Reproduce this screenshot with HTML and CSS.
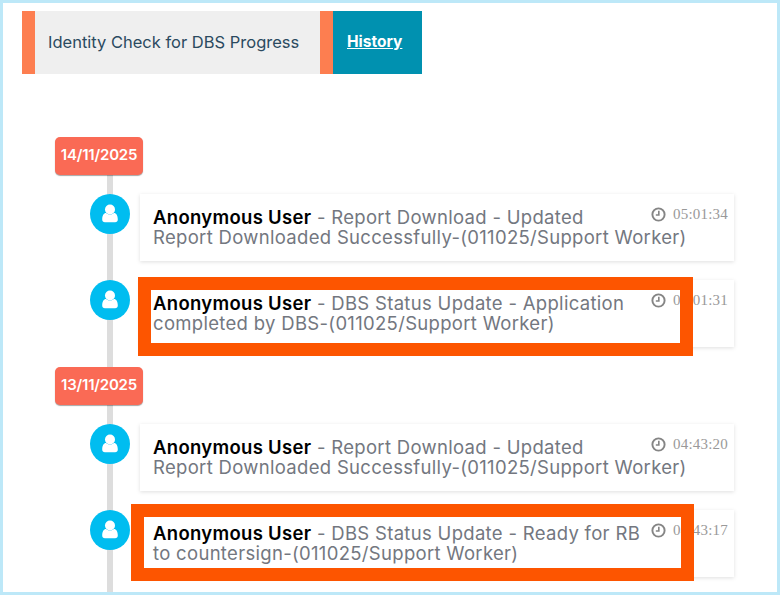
FILE: index.html
```html
<!DOCTYPE html>
<html lang="en">
<head>
<meta charset="utf-8">
<title>DBS History</title>
<link rel="stylesheet" href="styles.css">
</head>
<body>
<svg class="defs" width="0" height="0" aria-hidden="true">
  <symbol id="user" viewBox="0 0 40 40">
    <circle cx="20" cy="15.5" r="5" fill="#fff"/>
    <path d="M12.2 25.5c0-4.2 1.6-6.6 3.8-6.6 1 .9 2.5 1.5 4 1.5s3-.6 4-1.5c2.2 0 3.8 2.4 3.8 6.6 0 1.7-1.1 2.7-2.7 2.7H14.900c-1.600 0-2.700-1-2.700-2.700z" fill="#fff"/>
  </symbol>
  <symbol id="clock" viewBox="0 0 14 14">
    <circle cx="7" cy="7" r="5.700" fill="none" stroke="#858585" stroke-width="1.800"/>
    <path d="M7.300 3.600v3.900H4.500" fill="none" stroke="#858585" stroke-width="1.500"/>
  </symbol>
</svg>
<div class="frame">
  <nav class="tabs">
    <div class="tab tab-plain">Identity Check for DBS Progress</div>
    <div class="tab tab-active"><a href="#">History</a></div>
  </nav>
  <div class="timeline">
    <section class="group">
      <div class="date">14/11/2025</div>
      <article class="item">
        <svg class="avatar"><use href="#user"/></svg>
        <div class="card">
          <span class="time"><svg class="clock"><use href="#clock"/></svg>05:01:34</span>
          <p><b>Anonymous User</b> - Report Download - Updated<br>Report Downloaded Successfully-(011025/Support Worker)</p>
        </div>
      </article>
      <article class="item">
        <svg class="avatar"><use href="#user"/></svg>
        <div class="card">
          <span class="time"><svg class="clock"><use href="#clock"/></svg>05:01:31</span>
          <p><b>Anonymous User</b> - DBS Status Update - Application<br>completed by DBS-(011025/Support Worker)</p>
          <div class="mark mark-one"></div>
        </div>
      </article>
    </section>
    <section class="group">
      <div class="date">13/11/2025</div>
      <article class="item">
        <svg class="avatar"><use href="#user"/></svg>
        <div class="card">
          <span class="time"><svg class="clock"><use href="#clock"/></svg>04:43:20</span>
          <p><b>Anonymous User</b> - Report Download - Updated<br>Report Downloaded Successfully-(011025/Support Worker)</p>
        </div>
      </article>
      <article class="item">
        <svg class="avatar"><use href="#user"/></svg>
        <div class="card">
          <span class="time"><svg class="clock"><use href="#clock"/></svg>04:43:17</span>
          <p><b>Anonymous User</b> - DBS Status Update - Ready for RB<br>to countersign-(011025/Support Worker)</p>
          <div class="mark mark-two"></div>
        </div>
      </article>
    </section>
  </div>
</div>
</body>
</html>
```
FILE: styles.css
```css
* { box-sizing: border-box; }
html, body { margin: 0; padding: 0; }
body {
  width: 780px;
  height: 595px;
  overflow: hidden;
  background: #fff;
  font-family: Inter, "Open Sans", sans-serif;
}
.defs { position: absolute; }
.frame {
  width: 780px;
  height: 595px;
  border: 3px solid #bde8f8;
  padding: 8px 0 0 19px;
  overflow: hidden;
}
.tabs {
  display: flex;
  width: 400px;
  height: 63px;
}
.tab {
  display: flex;
  align-items: center;
  border-left: 13px solid #fd7e50;
}
.tab-plain {
  width: 298px;
  padding: 0 0 2px 13px;
  background: #efefef;
  color: #2b4a60;
  font-size: 16.500px;
}
.tab-active {
  width: 102px;
  padding: 0 0 2px 14px;
  background: #0091b0;
  font-size: 15.500px;
}
.tab-active a {
  color: #fff;
  font-weight: 700;
}
.timeline {
  position: relative;
  display: flex;
  flex-direction: column;
  gap: 20px;
  margin: 63px 0 0 33px;
}
.timeline::before {
  content: "";
  position: absolute;
  left: 52px;
  top: 30px;
  bottom: -40px;
  width: 6px;
  background: #ddd;
}
.group {
  position: relative;
  display: flex;
  flex-direction: column;
  gap: 19px;
}
.date {
  width: 88px;
  height: 38px;
  border-radius: 5px;
  background: #fa6a55;
  box-shadow: 0 1px 1px rgba(0, 0, 0, .35);
  color: #fff;
  font-size: 15px;
  font-weight: 600;
  line-height: 36px;
  text-align: center;
  letter-spacing: -0.2px;
}
.item {
  display: flex;
  gap: 10px;
  padding-left: 35px;
}
.avatar {
  flex: none;
  width: 40px;
  height: 40px;
  border-radius: 50%;
  background: #00bdf0;
}
.card {
  position: relative;
  width: 594px;
  height: 67px;
  padding: 13px 13px 0;
  background: #fff;
  box-shadow: 0 1px 4px rgba(0, 0, 0, .13);
}
.card p {
  margin: 0;
  color: #737780;
  font-size: 18.500px;
  letter-spacing: .31px;
  line-height: 20px;
  white-space: nowrap;
}
.card b {
  color: #000;
  font-weight: 600;
}
.time {
  position: absolute;
  top: 11px;
  right: 6px;
  display: flex;
  align-items: center;
  gap: 7px;
  color: #999;
  font-family: "Liberation Serif", serif;
  font-size: 15px;
  letter-spacing: .2px;
  line-height: 18px;
}
.clock {
  width: 15px;
  height: 15px;
}
.mark {
  position: absolute;
  border: 13px solid #fd5500;
}
.mark-one {
  left: -2px;
  top: -3px;
  width: 555px;
  height: 79px;
}
.mark-two {
  left: -9px;
  top: -6px;
  width: 563px;
  height: 77px;
}
```
